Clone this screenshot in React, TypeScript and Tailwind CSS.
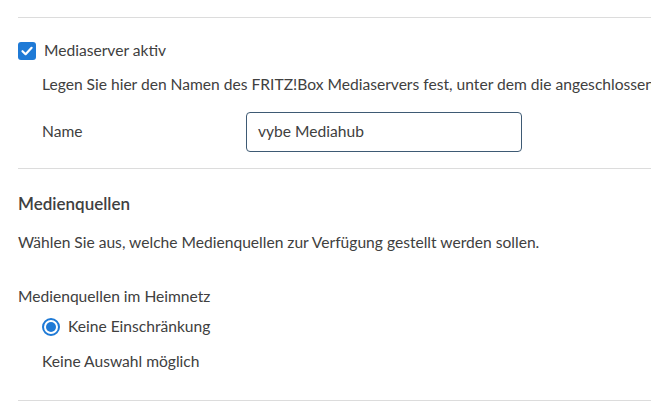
import React from "react";

const font = { fontFamily: "Lato, 'Noto Sans', sans-serif" };

const Checkbox = () => (
    <span className="w-[18px] h-[18px] rounded-[3px] bg-[#1f7ad6] flex items-center justify-center shrink-0">
        <svg width="14" height="14" viewBox="0 0 14 14" fill="none">
            <path d="M2.5 7.2 L5.6 10.2 L11.6 3.8" stroke="white" strokeWidth="2.2" strokeLinecap="round" strokeLinejoin="round" />
        </svg>
    </span>
);

const Radio = () => (
    <span className="w-[18px] h-[18px] rounded-full border-2 border-[#1f7ad6] flex items-center justify-center shrink-0">
        <span className="w-[10px] h-[10px] rounded-full bg-[#1f7ad6]" />
    </span>
);

export default function App() {
    return (
        <div className="w-[651px] h-[408px] bg-white overflow-hidden text-[15.6px] text-[#404040] pt-[17px] pl-[18px]" style={font}>
            <div className="h-px bg-[#dcdcdc]" />

            {/* Mediaserver */}
            <label className="mt-[21px] h-6 flex items-center gap-2">
                <Checkbox />
                <span>Mediaserver aktiv</span>
            </label>
            <div className="mt-[9px] ml-6 leading-6 whitespace-nowrap overflow-hidden">
                Legen Sie hier den Namen des FRITZ!Box Mediaservers fest, unter dem die angeschlossenen Geräte ihn finden.
            </div>
            <div className="mt-4 ml-6 flex items-center">
                <span className="w-[204px]">Name</span>
                <div className="w-[276px] h-10 border border-[#3e5a74] rounded-[4px] flex items-center px-[11px]">
                    vybe Mediahub
                </div>
            </div>

            <div className="mt-4 h-px bg-[#dcdcdc]" />

            {/* Medienquellen */}
            <h2 className="mt-[23px] leading-6 text-[17px] font-semibold">Medienquellen</h2>
            <p className="mt-[14px] leading-6">Wählen Sie aus, welche Medienquellen zur Verfügung gestellt werden sollen.</p>

            <p className="mt-[30px] leading-6">Medienquellen im Heimnetz</p>
            <label className="mt-[7px] ml-6 h-6 flex items-center gap-2">
                <Radio />
                <span>Keine Einschränkung</span>
            </label>
            <p className="mt-[10px] ml-6 leading-6">Keine Auswahl möglich</p>

            <div className="mt-[27px] h-px bg-[#dcdcdc]" />
        </div>
    );
}
